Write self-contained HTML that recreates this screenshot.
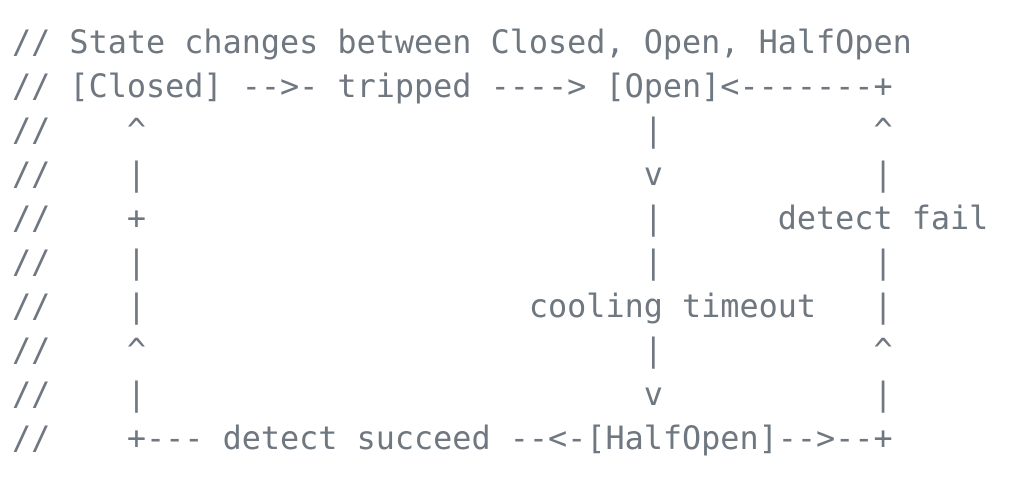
<!DOCTYPE html>
<html><head><style>
html,body{margin:0;background:#fff;width:1030px;height:486px;overflow:hidden}
pre{margin:0;padding:21px 0 0 12px;font-family:"DejaVu Sans Mono",monospace;font-size:31.8px;line-height:44px;color:#6f7781}
</style></head><body><pre>// State changes between Closed, Open, HalfOpen
// [Closed] -->- tripped ----> [Open]&lt;-------+
//    ^                          |           ^
//    |                          v           |
//    +                          |      detect fail
//    |                          |           |
//    |                    cooling timeout   |
//    ^                          |           ^
//    |                          v           |
//    +--- detect succeed --&lt;-[HalfOpen]--&gt;--+</pre></body></html>
